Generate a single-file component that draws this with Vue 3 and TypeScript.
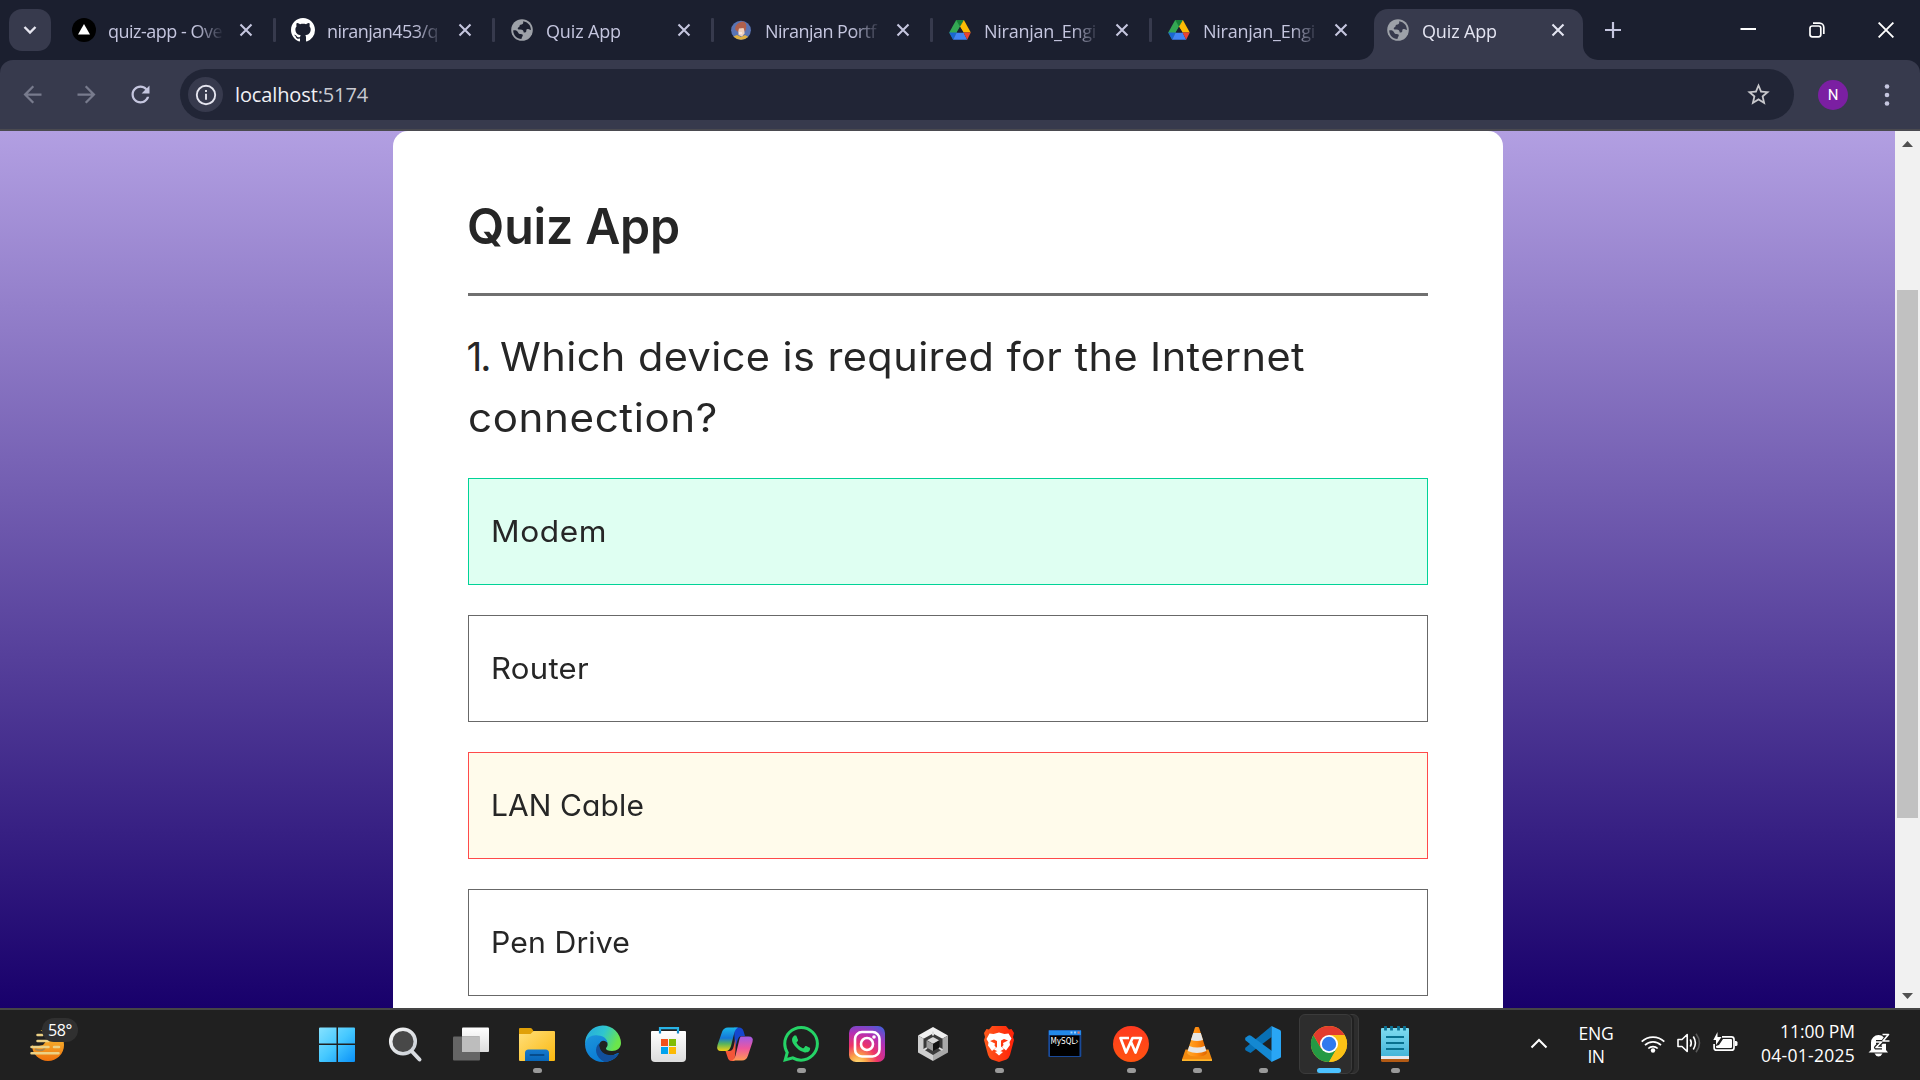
<script setup lang="ts">
import type { Directive } from 'vue'

interface Tab {
  title: string
  width: number
  icon: 'vercel' | 'github' | 'globe' | 'avatar' | 'drive'
  active?: boolean
}

interface Option {
  label: string
  width: number
  state?: 'correct' | 'wrong'
}

const tabs: Tab[] = [
  { title: 'quiz-app - Ove', width: 114, icon: 'vercel' },
  { title: 'niranjan453/q', width: 111, icon: 'github' },
  { title: 'Quiz App', width: 75, icon: 'globe' },
  { title: 'Niranjan Portf', width: 111, icon: 'avatar' },
  { title: 'Niranjan_Engi', width: 112, icon: 'drive' },
  { title: 'Niranjan_Engi', width: 112, icon: 'drive' },
  { title: 'Quiz App', width: 75, icon: 'globe', active: true },
]

const options: Option[] = [
  { label: 'Modem', width: 116, state: 'correct' },
  { label: 'Router', width: 98 },
  { label: 'LAN Cable', width: 153, state: 'wrong' },
  { label: 'Pen Drive', width: 139 },
]

// Spreads the tracking of a line so that it takes the given width.
const vFit: Directive<HTMLElement, number> = {
  mounted(el, binding) {
    const natural = el.getBoundingClientRect().width
    const count = (el.textContent ?? '').trim().length
    el.style.letterSpacing = `${(binding.value - natural) / count}px`
  },
}

// Widens the letters of a line; a small share of the gap goes to the tracking.
const vStretch: Directive<HTMLElement, number> = {
  mounted(el, binding) {
    const natural = el.getBoundingClientRect().width
    const count = (el.textContent ?? '').trim().length
    const tracked = natural + (binding.value - natural) * 0.25
    el.style.letterSpacing = `${(tracked - natural) / count}px`
    el.style.transform = `scaleX(${binding.value / tracked})`
    el.style.marginRight = `${binding.value - tracked}px`
  },
}
</script>

<template>
  <div class="screen">
    <header class="tabstrip">
      <div class="tab-search">
        <svg width="14" height="10" viewBox="0 0 14 10"><path d="M1.5 2l5.500 5.500L12.500 2" fill="none" stroke="#e6e6f0" stroke-width="2.400" /></svg>
      </div>
      <div v-for="(tab, i) in tabs" :key="i" class="tab" :class="{ active: tab.active }">
        <svg v-if="tab.icon === 'vercel'" class="fav" viewBox="0 0 24 24"><circle cx="12" cy="12" r="12" fill="#000" /><path d="M12 6l6 10.500H6z" fill="#fff" /></svg>
        <svg v-else-if="tab.icon === 'github'" class="fav" viewBox="0 0 16 16"><path fill="#fff" d="M8 0C3.580 0 0 3.580 0 8c0 3.540 2.290 6.530 5.470 7.590.4.070.55-.17.55-.38 0-.19-.01-.82-.01-1.490-2.010.37-2.530-.49-2.690-.94-.09-.23-.48-.94-.82-1.130-.28-.15-.68-.52-.01-.53.63-.01 1.080.58 1.230.82.72 1.210 1.870.87 2.330.66.07-.52.28-.87.51-1.070-1.780-.2-3.640-.89-3.640-3.950 0-.87.31-1.590.82-2.150-.08-.2-.36-1.020.08-2.120 0 0 .67-.21 2.200.82.64-.18 1.320-.27 2-.27s1.360.09 2 .27c1.530-1.040 2.200-.82 2.200-.82.44 1.100.16 1.920.08 2.120.51.56.82 1.270.82 2.150 0 3.070-1.870 3.750-3.650 3.950.29.25.54.73.54 1.480 0 1.070-.01 1.930-.01 2.200 0 .21.15.46.55.38A8.010 8.010 0 0 0 16 8c0-4.420-3.580-8-8-8z" /></svg>
        <svg v-else-if="tab.icon === 'globe'" class="fav" viewBox="0 0 24 24">
          <circle cx="12" cy="12" r="10.800" fill="#9da1a8" />
          <g :fill="tab.active ? '#373a4d' : '#1b1f2f'">
            <path d="M13.200 3.300c-.2 1.200.5 1.900-.6 2.700-1.300.9-3 .4-3 1.900 0 1.400-1.900 1.300-1.900 2.600 0 1 1.200 1 2.600 1 2.500 0 3.300 1.100 3.400 2.900 1.600 0 2.700-.2 2.600-1.700-.1-1.300.9-1.600 1.900-1.600 1.300 0 1.600 1 2.700.8 0-4.500-3-7.800-7.700-8.600z" />
            <path d="M3.200 12.400c.1 4.600 3.600 8.400 8.200 8.500.5-1 .3-1.800 1-2.500.7-.7.500-1.900-.6-2.100-1.600-.3-3-.2-3.700-1.800-.7-1.800-2.400-2.300-4.900-2.100z" />
          </g>
        </svg>
        <svg v-else-if="tab.icon === 'avatar'" class="fav" viewBox="0 0 24 24">
          <clipPath id="face"><ellipse cx="12" cy="12.200" rx="9.900" ry="9.500" /></clipPath>
          <g clip-path="url(#face)">
            <path fill="#5a74b4" d="M0 0h24v24H0z" /><path fill="#e0b040" d="M3 19l5-2 4 2 4-2 5 3v4H3z" />
            <path fill="#f0d0bc" d="M9 10h6.500v5.500l-2.500 3-3.500-1.500z" /><path fill="#b0604c" d="M6.500 12c-1.500-4 2.500-8 8-8.500 3.500 1.500 3.500 6 1.500 10.500l-1.500-4-4.500.5-1 3.500z" />
            <path stroke="#fff" d="M10 15h3" />
          </g>
        </svg>
        <svg v-else class="fav" viewBox="0 0 24 24">
          <path d="M8.200 2h7.700l-4 7L5 21 1.200 14.500z" fill="#34a853" /><path d="M8.200 2h7.700L12 8.800z" fill="#188038" />
          <path d="M15.900 2l6.900 12.500h-7.200L12 8.800z" fill="#fbbc04" />
          <path d="M1.200 14.500h7.400L5 21.700z" fill="#1967d2" /><path d="M8.600 14.500h7l3.600 7.200H5z" fill="#4285f4" /><path d="M15.500 14.500h7.300l-3.600 7.200z" fill="#ea4335" />
          <path d="M12 8.900l3.400 5.700H8.700z" fill="#1b1f2f" />
        </svg>
        <span class="tab-title"><span v-fit="tab.width">{{ tab.title }}</span></span>
        <svg class="tab-close" width="14" height="14" viewBox="0 0 14 14"><path d="M1.500 1.500l11 11M12.500 1.500l-11 11" stroke="currentColor" stroke-width="2.100" /></svg>
        <i v-if="i < 5" class="sep"></i>
        <template v-if="tab.active">
          <svg class="flare left" width="15" height="15"><path d="M15 0v15H0A15 15 0 0 0 15 0z" fill="#373a4d" /></svg>
          <svg class="flare right" width="15" height="15"><path d="M0 0v15h15A15 15 0 0 1 0 0z" fill="#373a4d" /></svg>
        </template>
      </div>
      <svg class="plus" width="16" height="16" viewBox="0 0 16 16"><path d="M8 0v16M0 8h16" stroke="#c5c6df" stroke-width="2.200" /></svg>
      <div class="window-controls">
        <svg width="16" height="16" viewBox="0 0 16 16"><path d="M.5 7h15.500" stroke="#fff" stroke-width="2" /></svg>
        <svg width="16" height="16" viewBox="0 0 16 16" fill="none" stroke="#fff" stroke-width="1.700"><rect x="1" y="4" width="10.800" height="10.800" rx="2.300" /><path d="M4 1.200h6.500a4.300 4.300 0 0 1 4.300 4.300V12" /></svg>
        <svg width="16" height="16" viewBox="0 0 16 16"><path d="M.6.600l14.800 14.800M15.400.600L.6 15.400" stroke="#fff" stroke-width="1.900" /></svg>
      </div>
    </header>

    <div class="toolbar-back">
      <div class="toolbar">
        <svg class="nav" viewBox="0 0 24 24" fill="#787b8d"><path d="M20 11H7.830l5.590-5.590L12 4l-8 8 8 8 1.410-1.410L7.830 13H20v-2z" /></svg>
        <svg class="nav" viewBox="0 0 24 24" fill="#787b8d"><path d="M12 4l-1.410 1.410L16.170 11H4v2h12.170l-5.580 5.590L12 20l8-8z" /></svg>
        <svg class="nav" viewBox="0 0 24 24" fill="#c5c6df"><path d="M17.650 6.350C16.200 4.900 14.210 4 12 4c-4.420 0-7.990 3.580-7.990 8s3.570 8 7.990 8c3.730 0 6.840-2.550 7.730-6h-2.080c-.82 2.330-3.040 4-5.650 4-3.310 0-6-2.690-6-6s2.690-6 6-6c1.660 0 3.140.69 4.220 1.780L13 11h7V4l-2.350 2.350z" /></svg>
        <div class="omnibox">
          <span class="site-info">
            <svg width="22" height="22" viewBox="0 0 22 22"><circle cx="11" cy="11" r="9.200" fill="none" stroke="#e4e4ee" stroke-width="1.900" /><path d="M11 9.700v6M11 6v2" stroke="#e4e4ee" stroke-width="1.900" /></svg>
          </span>
          <span v-fit="133" class="url">localhost<span class="port">:5174</span></span>
          <svg class="star" viewBox="0 0 24 24" fill="#c8c8cc"><path d="M22 9.240l-7.190-.62L12 2 9.190 8.630 2 9.240l5.460 4.730L5.820 21 12 17.270 18.180 21l-1.630-7.030L22 9.240zM12 15.400l-3.760 2.270 1-4.280-3.320-2.880 4.380-.38L12 6.100l1.710 4.040 4.380.38-3.320 2.880 1 4.280L12 15.400z" /></svg>
        </div>
        <span class="profile">N</span>
        <svg class="menu" width="6" height="24" viewBox="0 0 6 24" fill="#c5c6df"><circle cx="3" cy="3.500" r="2.300" /><circle cx="3" cy="12" r="2.300" /><circle cx="3" cy="20.500" r="2.300" /></svg>
      </div>
    </div>

    <div class="viewport">
      <main class="page">
        <section class="card">
          <h1><span v-stretch="213" class="line">Quiz App</span></h1>
          <hr />
          <h2>
            <span class="row"><span class="number">1.</span><span v-stretch="805" class="line">Which device is required for the Internet</span></span>
            <span class="row"><span v-stretch="250" class="line">connection?</span></span>
          </h2>
          <ul>
            <li v-for="o in options" :key="o.label" :class="o.state"><span v-stretch="o.width" class="line">{{ o.label }}</span></li>
          </ul>
        </section>
      </main>
      <div class="scrollbar">
        <svg width="11" height="6"><path d="M5.500 0L11 6H0z" fill="#505050" /></svg>
        <div class="thumb"></div>
        <svg width="11" height="6"><path d="M5.500 6L11 0H0z" fill="#505050" /></svg>
      </div>
    </div>

    <footer class="taskbar">
      <svg width="0" height="0" class="defs">
        <defs>
          <linearGradient id="win" x2="1" y2="1"><stop stop-color="#86e2ff" /><stop offset=".5" stop-color="#45c8ff" /><stop offset="1" stop-color="#0a91f8" /></linearGradient>
          <linearGradient id="white" x2="0" y2="1"><stop stop-color="#fff" /><stop offset="1" stop-color="#dcdcdc" /></linearGradient>
          <linearGradient id="gray" x2="1" y2="1"><stop stop-color="#f8f8f8" /><stop offset="1" stop-color="#c8cdd4" /></linearGradient>
          <linearGradient id="folder" x2="1" y2="1"><stop stop-color="#ffdf7a" /><stop offset="1" stop-color="#fbb80f" /></linearGradient>
          <linearGradient id="blue" x2="0" y2="1"><stop stop-color="#1679cc" /><stop offset="1" stop-color="#0866b8" /></linearGradient>
          <linearGradient id="edgeTop" x2="1" y2=".35"><stop stop-color="#24a6e0" /><stop offset=".55" stop-color="#2fc5cf" /><stop offset="1" stop-color="#6be54b" /></linearGradient>
          <linearGradient id="edgeMid" x2=".6" y2="1"><stop stop-color="#1d95dc" /><stop offset="1" stop-color="#0778d2" /></linearGradient>
          <linearGradient id="copA" x2="0" y2="1"><stop stop-color="#1bb6e8" /><stop offset=".45" stop-color="#1478d8" /><stop offset=".7" stop-color="#5ab55a" /><stop offset="1" stop-color="#f5d014" /></linearGradient>
          <linearGradient id="copB" x2="0" y2="1"><stop stop-color="#a05be8" /><stop offset=".5" stop-color="#ef579c" /><stop offset="1" stop-color="#ff9a52" /></linearGradient>
          <radialGradient id="insta" cx=".25" cy="1.050" r="1.200"><stop stop-color="#ffe27a" /><stop offset=".2" stop-color="#fba447" /><stop offset=".45" stop-color="#ee3368" /><stop offset=".72" stop-color="#b52fb4" /><stop offset="1" stop-color="#4b5bd8" /></radialGradient>
          <linearGradient id="brave" x2="1"><stop stop-color="#ff5a1c" /><stop offset="1" stop-color="#ff2108" /></linearGradient>
          <linearGradient id="wps" x2="0" y2="1"><stop stop-color="#ff3a20" /><stop offset="1" stop-color="#ff5310" /></linearGradient>
          <linearGradient id="sun" x2="0" y2="1"><stop stop-color="#f7ca3c" /><stop offset="1" stop-color="#f0720c" /></linearGradient>
          <linearGradient id="cone" x2="1"><stop stop-color="#ffab2d" /><stop offset=".5" stop-color="#ff8b0f" /><stop offset="1" stop-color="#de6500" /></linearGradient>
          <linearGradient id="note" x2="0" y2="1"><stop stop-color="#7fdcf0" /><stop offset="1" stop-color="#45b5da" /></linearGradient>
        </defs>
      </svg>

      <div class="weather">
        <svg width="36" height="36" viewBox="0 0 36 36">
          <circle cx="18" cy="19" r="16" fill="url(#sun)" />
          <path d="M5 23q7 3 10-1" stroke="#a8844c" stroke-width="2" fill="none" />
          <path d="M0 5h12l6 8-5 6-8 2-5-3z" fill="#202020" />
          <g stroke="#ecd185" stroke-width="2.500" stroke-linecap="round"><path d="M7.500 9h5M7.500 15h11M1.500 21h17M24 21h5M1.500 27.300h27" /></g>
        </svg>
        <span class="temp"><span v-fit="24">58°</span></span>
      </div>

      <nav class="apps">
        <div class="app start">
          <svg viewBox="0 0 36 36"><path fill="url(#win)" d="M0 1.500h16.500v16H-1v-15q0-1 1-1zM18 1.500h16q1 0 1 1v15H18zM-1 19h17.500v17H0q-1 0-1-1zM18 19h17v16q0 1-1 1H18z" /></svg>
        </div>
        <div class="app">
          <svg viewBox="0 0 36 36"><circle cx="16" cy="15.500" r="12.300" fill="#484848" stroke="url(#gray)" stroke-width="3.500" /><path d="M25 25.500l7.500 8" stroke="#d9dce1" stroke-width="4" stroke-linecap="round" /></svg>
        </div>
        <div class="app">
          <svg viewBox="0 0 36 36"><rect x="9" y="1.500" width="27" height="24.500" rx="1" fill="url(#white)" /><rect y="10.500" width="27" height="24" rx="1" fill="#656565" /><path d="M9 10.500h17.500q.5 0 .5.500v15H9z" fill="#bdbdbd" /></svg>
        </div>
        <div class="app run">
          <svg viewBox="0 0 36 36"><path d="M1 2h10.500q1.500 0 2 1.500L15 6v5H0V3q0-1 1-1z" fill="#e0a008" /><path d="M0 8h11.500l3-3H35q1 0 1 1v28q0 1-1 1H1q-1 0-1-1z" fill="url(#folder)" /><path d="M6 35v-8q0-3.500 3.500-3.500h17Q30 23.500 30 27v8z" fill="url(#blue)" /><path d="M11.500 29h13" stroke="#064c8c" stroke-width="2" stroke-linecap="round" /></svg>
        </div>
        <div class="app">
          <svg viewBox="0 0 36 36">
            <path d="M0 18A18 18 0 0 1 36 17c0 5-4 8-9 8-4 0-6-1-6-2.500 0-1 2-2 1.500-5C22 13 17 11 12 12 6 12 2 14 0 18z" fill="url(#edgeTop)" />
            <path d="M0 18C2 11 7 8.500 13 9.500c6 0 9.500 4 9.500 8-1.500-4-8-4-8.500 2 0 7 6 10.500 12 10 4-.5 6.500-3 8-2.500C31 33 25 36 18 36 8 36 0 28.500 0 18z" fill="url(#edgeMid)" />
            <path d="M14 17.500c-5 4-4 14 5.500 18.400C26 35.500 31 32.500 34 27c-7 4.500-20 2.500-20-9.500z" fill="#124f9c" />
          </svg>
        </div>
        <div class="app">
          <svg viewBox="0 0 36 36"><path d="M9 8V2.200h18V8" fill="none" stroke="#28b3e6" stroke-width="2.200" /><path d="M1 5h33q1 0 1 1v26q0 4-4 4H4q-4 0-4-4V6q0-1 1-1z" fill="url(#white)" /><path d="M9 5v2.500M27 5v2.500" stroke="#1689c8" stroke-width="2.200" /><path d="M10 13h7v7h-7z" fill="#f1511b" /><path d="M18 13h7v7h-7z" fill="#80bc06" /><path d="M10 21h7v7h-7z" fill="#00a3ee" /><path d="M18 21h7v7h-7z" fill="#fbb904" /></svg>
        </div>
        <div class="app">
          <svg viewBox="0 0 36 36">
            <path d="M17 1.500h5q3.500 0 4.500 3.500l1.500 5h-3q-3 0-4 3l-3 9z" fill="#1546cf" />
            <path d="M11 1.500h10q-2.500 1-3.500 4.500L14 20q-1.500 5-5 5H4q-5 0-3.500-6L5 6q1.500-4.500 6-4.500z" fill="url(#copA)" />
            <path d="M8.500 25h4q3 0 4-4l2-8v11l-1 11h-3q-3 0-4-4z" fill="#f45638" />
            <path d="M24 10.500h7.500q5.500 0 4 5.500L31 29.500q-1.500 5-6 5H15q2.500-1 3.500-5L22 15q1-4.500 2-4.500z" fill="url(#copB)" />
          </svg>
        </div>
        <div class="app run">
          <svg viewBox="0 0 24 24"><path fill="#25d366" d="M17.472 14.382c-.297-.149-1.758-.867-2.030-.967-.273-.099-.471-.148-.67.15-.197.297-.767.966-.94 1.164-.173.199-.347.223-.644.075-.297-.15-1.255-.463-2.390-1.475-.883-.788-1.480-1.761-1.653-2.059-.173-.297-.018-.458.13-.606.134-.133.298-.347.446-.52.149-.174.198-.298.298-.497.099-.198.05-.371-.025-.52-.075-.149-.669-1.612-.916-2.207-.242-.579-.487-.5-.669-.51-.173-.008-.371-.01-.57-.01-.198 0-.52.074-.792.372-.272.297-1.040 1.016-1.040 2.479 0 1.462 1.065 2.875 1.213 3.074.149.198 2.096 3.200 5.077 4.487.709.306 1.262.489 1.694.625.712.227 1.360.195 1.871.118.571-.085 1.758-.719 2.006-1.413.248-.694.248-1.289.173-1.413-.074-.124-.272-.198-.57-.347m-5.421 7.403h-.004a9.870 9.870 0 0 1-5.031-1.378l-.361-.214-3.741.982.998-3.648-.235-.374a9.860 9.860 0 0 1-1.510-5.260c.001-5.450 4.436-9.884 9.888-9.884 2.640 0 5.122 1.030 6.988 2.898a9.825 9.825 0 0 1 2.893 6.994c-.003 5.450-4.437 9.884-9.885 9.884m8.413-18.297A11.815 11.815 0 0 0 12.050 0C5.495 0 .16 5.335.157 11.892c0 2.096.547 4.142 1.588 5.945L.057 24l6.305-1.654a11.882 11.882 0 0 0 5.683 1.448h.005c6.554 0 11.890-5.335 11.893-11.893a11.821 11.821 0 0 0-3.480-8.413z" /></svg>
        </div>
        <div class="app">
          <svg viewBox="0 0 36 36"><rect width="36" height="36" rx="7" fill="url(#insta)" /><g fill="none" stroke="#fff" stroke-width="2.600"><rect x="6" y="6" width="24.500" height="24.500" rx="7" /><circle cx="18" cy="18" r="6" /></g><circle cx="25" cy="11" r="1.800" fill="#fff" /></svg>
        </div>
        <div class="app">
          <svg viewBox="0 0 36 36"><path d="M18 1l15 8.500-15 8.500L3 9.500z" fill="#f0f0f0" /><path d="M3 9.500L18 18v17L3 26.500z" fill="#cecece" /><path d="M33 9.500L18 18v17l15-8.500z" fill="#a9a9a9" /><path d="M18 7.500l9.500 5.300v10.500L18 29l-9.500-5.700V12.800z" fill="#3a3a3a" /><path d="M18 11l6 3.300-6 3.500-6-3.500z" fill="#d8d8d8" /><path d="M18 18l-6.500-3.500v7L18 25z" fill="#9b9b9b" /><path d="M18 18l6.500-3.500v7L18 25z" fill="#111" /><path d="M18 5.500v4M8.500 24l3.500-2M27.500 24l-3.500-2" stroke="#ddd" stroke-width="2" /></svg>
        </div>
        <div class="app run">
          <svg viewBox="0 0 36 36"><path d="M11 0h14l3 3.500 2.500-.5 2.500 4-1 4 1 3-4 15q-1 3-3.500 4.500L18 36l-7.500-2.500Q8 32 7 29L3 14l1-3-1-4 2.500-4 2.500.5z" fill="url(#brave)" /><path d="M8.500 7.500l4 .5L18 6.500l5.500 1.500 4-.5 3 5-2 3.500.5 3-4 5.500-4-3.500 1.500-2-.5-2 5-2.500-4-1.500-3 1.500v6l3 2.500L18 26l-5-2.500 3-2.500v-6L13 13.500 9 15l5 2.500-.5 2 1.500 2-4 3.500L7 19.500l.5-3-2-3.500zM14 26l4-1.500 4 1.500-4 3.500z" fill="#fff" /></svg>
        </div>
        <div class="app">
          <svg viewBox="0 0 36 36"><rect x="1.300" y="4" width="33" height="27" rx="1" fill="#194a9a" /><path d="M2 4.500h32v4.500H2z" fill="#2389e8" /><path d="M23.500 5.500h2v2h-2zM27 5.500h2v2h-2z" fill="#9dd0ff" /><path d="M30.500 5.500h2.200v2.200h-2.200z" fill="#f17359" /><path d="M3 9.500h29.500V30H3z" fill="#000" /><text x="3.500" y="18" font-family="DejaVu Sans, sans-serif" font-size="8" fill="#fff" textLength="28" lengthAdjust="spacingAndGlyphs">MySQL›</text></svg>
        </div>
        <div class="app run">
          <svg viewBox="0 0 36 36"><circle cx="18" cy="18" r="18" fill="url(#wps)" /><path d="M16 12H7.500l5.500 14.500L19.500 12H28l-5.500 14.500L18 16" fill="none" stroke="#fff" stroke-width="2.700" stroke-linejoin="round" /></svg>
        </div>
        <div class="app run">
          <svg viewBox="0 0 36 36"><path d="M6.500 23.500h23L33 33.500v1.500H3v-1.500z" fill="#f28a10" /><path d="M3 33.300h30V35H3z" fill="#ffb52b" /><path d="M17 1h2q1 0 1.300 1.300L28 27q-2 3.500-10 3.500T8 27l7.700-24.700Q16 1 17 1z" fill="url(#cone)" /><path d="M14.200 7h7.600l2.200 7q-6 2-12 0zM10.200 20q8 3 15.600 0l1.500 5q-9.300 4-18.600 0z" fill="#e5e5e5" /></svg>
        </div>
        <div class="app run">
          <svg viewBox="0 0 36 36"><path d="M26.500 0v11L5.500 27 .7 24.500Q-.7 23 .7 21.500z" fill="#0870b5" /><path d="M.7 14.500Q-.7 13 .7 11.500L3 9.700q1.500-1 3 0L27 25v11z" fill="#1488d2" /><path d="M26.500 0L35 4q1 .5 1 1.500v25q0 1-1 1.500l-8.500 4V0z" fill="#29a6f5" /></svg>
        </div>
        <div class="app current">
          <i class="stack"></i>
          <svg viewBox="0 0 36 36"><circle cx="18" cy="18" r="18" fill="#fbc116" /><path d="M18 18L2.400 9A18 18 0 0 1 33.600 9H18z" fill="#e33b2e" /><path d="M2.400 9A18 18 0 0 0 18 36l7.800-13.500L18 18l-7.800 4.500z" fill="#249944" /><path d="M2.400 9L10.200 22.500 18 18V9z" fill="#e33b2e" /><path d="M18 9h15.600A18 18 0 0 1 18 36l7.800-13.500z" fill="#fbc116" /><circle cx="18" cy="18" r="9" fill="#fff" /><circle cx="18" cy="18" r="7.200" fill="#2f79ee" /></svg>
        </div>
        <div class="app run">
          <svg viewBox="0 0 36 36"><path d="M4 30h28v4.500q0 1.500-1.500 1.500h-25Q4 36 4 34.500z" fill="#b35a14" /><path d="M4 29h28v4H4z" fill="#e8e8ee" /><path d="M5 2h26q1 0 1 1v27H4V3q0-1 1-1z" fill="url(#note)" /><path d="M8.500 0v4.500M14.500 0v4.500M21.500 0v4.500M27.500 0v4.500" stroke="#0b7395" stroke-width="2.800" /><path d="M9 11h18M9 17h18M9 23h18" stroke="#08708f" stroke-width="2" /></svg>
        </div>
      </nav>

      <div class="tray">
        <svg class="chevron" width="18" height="11" viewBox="0 0 18 11"><path d="M1.500 9.500L9 2l7.500 7.500" fill="none" stroke="#fff" stroke-width="2" /></svg>
        <div class="lang"><span v-fit="35">ENG</span><span v-fit="17">IN</span></div>
        <svg class="wifi" width="24" height="18" viewBox="0 0 24 18"><g fill="none" stroke="#fff" stroke-width="1.700"><path d="M.7 6.700a16 16 0 0 1 22.600 0M4 10.200a11.300 11.300 0 0 1 16 0M7.300 13.500a6.600 6.600 0 0 1 9.400 0" /></g><circle cx="12" cy="15.500" r="2.200" fill="#fff" /></svg>
        <svg class="volume" width="24" height="20" viewBox="0 0 24 20" fill="none" stroke-width="1.600"><path d="M1 6.500h4L10.200 1.500v17L5 13.500H1z" stroke="#fff" stroke-linejoin="round" /><path d="M13.300 6.300q2 3.700 0 7.400M16.300 3.500q4.200 6.500 0 13" stroke="#fff" /><path d="M19 .8q7 9.200 0 18.400" stroke="#585858" /></svg>
        <svg class="battery" width="25" height="20" viewBox="0 0 25 20"><path d="M9 4.800h9.500q2.500 0 2.500 2.500v8.400q0 2.500-2.500 2.500H3.600q-2.500 0-2.500-2.500V12" fill="none" stroke="#fff" stroke-width="1.700" /><path d="M10 7h8q1 0 1 1v7q0 1-1 1H4q-1 0-1-1v-1l3-1z" fill="#fff" /><path d="M22 9h1q1.500 0 1.500 1.500v2q0 1.500-1.500 1.500h-1z" fill="#fff" /><path d="M4.500 0v5h4L3 13V8H.3z" fill="#fff" /></svg>
        <div class="clock"><span v-fit="75">11:00 PM</span><span v-fit="94">04-01-2025</span></div>
        <svg class="bell" width="23" height="24" viewBox="0 0 23 24"><path d="M3 17V9.500a7.500 7.500 0 0 1 15 0V17l2 2.500H.500z" fill="#fff" /><path d="M6.500 20.500h8q-1.500 3-4 3t-4-3z" fill="#fff" /><g fill="none" stroke-linejoin="round"><path d="M15 1.500h5.500l-5 7h6" stroke="#202020" stroke-width="4.500" /><path d="M8 9h5.500L8 14.500h6" stroke="#202020" stroke-width="4" /><path d="M8 9h5.500L8 14.500h6M14.500 1.500h6l-5.500 6.500h6.500" stroke="#fff" stroke-width="1.700" /></g></svg>
      </div>
    </footer>
  </div>
</template>

<style>
body {
  margin: 0;
  overflow: hidden;
}
</style>

<style scoped>
.screen {
  width: 1920px;
  height: 1080px;
  display: flex;
  flex-direction: column;
  font-family: 'Open Sans', 'Noto Sans', sans-serif;
  overflow: hidden;
}
svg {
  display: block;
  flex: none;
}

/* tab strip */
.tabstrip {
  height: 60px;
  flex: none;
  display: flex;
  align-items: center;
  background: #1b1f2f;
  padding-left: 9px;
}
.tab-search {
  width: 42px;
  height: 42px;
  border-radius: 13px;
  background: #373a4d;
  display: flex;
  align-items: center;
  justify-content: center;
  margin-right: 9px;
}
.tab {
  width: 207px;
  height: 60px;
  padding-left: 12px;
  flex: none;
  display: flex;
  align-items: center;
  position: relative;
  color: #c5c6df;
}
.tab.active {
  width: 197px;
  height: 51px;
  margin-top: 9px;
  background: #373a4d;
  border-radius: 14px 14px 0 0;
  color: #e4e5f2;
}
.tab.active > .fav,
.tab.active > .tab-close {
  margin-bottom: 9px;
}
.fav {
  width: 24px;
  height: 24px;
}
.tab-title {
  width: 115px;
  margin: 2px 16px 0 12px;
  flex: none;
  font-size: 18px;
  line-height: 30px;
  white-space: nowrap;
  -webkit-mask-image: linear-gradient(90deg, #000 88px, transparent 116px);
  mask-image: linear-gradient(90deg, #000 88px, transparent 116px);
}
.tab.active > .tab-title {
  margin: 0 14px 7px 12px;
}
.sep {
  width: 3px;
  height: 24px;
  border-radius: 1px;
  margin-left: 20px;
  background: #373a4d;
  flex: none;
}
.flare {
  position: absolute;
  bottom: 0;
}
.flare.left {
  left: -15px;
}
.flare.right {
  right: -15px;
}
.plus {
  margin-left: 22px;
}
.window-controls {
  margin-left: auto;
  margin-right: 26px;
  display: flex;
  gap: 53px;
}

/* toolbar */
.toolbar-back {
  background: #1b1f2f;
  flex: none;
}
.toolbar {
  height: 69px;
  display: flex;
  align-items: center;
  background: #373a4d;
  border-bottom: 2px solid #4a4a50;
  border-radius: 13px 13px 0 0;
  padding-left: 19px;
}
.nav {
  width: 27px;
  height: 27px;
  margin-right: 27px;
}
.omnibox {
  width: 1614px;
  height: 51px;
  margin-left: -1px;
  border-radius: 26px;
  background: #212536;
  display: flex;
  align-items: center;
  box-sizing: border-box;
  padding: 0 22px 0 8px;
}
.site-info {
  width: 35px;
  height: 35px;
  border-radius: 50%;
  background: #373a4d;
  display: flex;
  align-items: center;
  justify-content: center;
  margin-right: 12px;
}
.url {
  font-size: 20px;
  line-height: 30px;
  color: #f0f0f4;
}
.port {
  color: #c9cad2;
}
.star {
  width: 27px;
  height: 27px;
  margin-left: auto;
}
.profile {
  width: 30px;
  height: 30px;
  margin: 1px 0 0 24px;
  border-radius: 50%;
  background: #7b1fa2;
  color: #fff;
  font: 15px/30px Roboto, sans-serif;
  text-align: center;
}
.menu {
  margin-left: 36px;
}

/* page */
.viewport {
  height: 877px;
  flex: none;
  display: flex;
}
.page {
  width: 1895px;
  height: 877px;
  background: linear-gradient(#b29fe2, #18006b);
  display: flex;
  justify-content: center;
}
.card {
  width: 960px;
  height: 818px;
  padding: 59px 75px 0;
  background: #fff;
  border-radius: 15px 15px 0 0;
  color: #262626;
  font-family: Inter, 'Open Sans', sans-serif;
  font-feature-settings: 'cv11';
}
.line {
  display: inline-block;
  transform-origin: 0 50%;
  white-space: nowrap;
}
h1 {
  margin: 0 0 0 -1px;
  font-size: 49px;
  line-height: 73px;
  font-weight: 600;
}
hr {
  height: 3px;
  border: 0;
  margin: 30px 0 0;
  background: #707070;
}
h2 {
  margin: 30px 0 0;
  height: 152px;
  font-size: 39px;
  line-height: 61px;
  font-weight: 400;
}
.row {
  display: flex;
}
.number {
  width: 33px;
  flex: none;
  margin-left: -1px;
  letter-spacing: -2px;
}
ul {
  list-style: none;
  margin: 0;
  padding: 0;
  display: flex;
  flex-direction: column;
  gap: 30px;
}
li {
  height: 105px;
  line-height: 105px;
  border: 1px solid #686868;
  padding-left: 22px;
  font-size: 29.500px;
}
li.correct {
  background: #dffff2;
  border-color: #00d397;
}
li.wrong {
  background: #fffbeb;
  border-color: #ff4a4a;
}
.scrollbar {
  width: 25px;
  height: 877px;
  background: #f1f1f1;
  display: flex;
  flex-direction: column;
  align-items: center;
  box-sizing: border-box;
  padding: 10px 0 9px;
}
.thumb {
  width: 21px;
  height: 528px;
  margin: 143px 0 auto;
  background: #c1c1c1;
}

/* taskbar */
.taskbar {
  height: 70px;
  flex: none;
  border-top: 2px solid #454545;
  background: #202020;
  display: flex;
  color: #fff;
}
.defs {
  position: absolute;
}
.weather {
  width: 276px;
  height: 54px;
  padding: 16px 0 0 30px;
  position: relative;
}
.temp {
  position: absolute;
  left: 42px;
  top: 8px;
  width: 36px;
  height: 24px;
  border-radius: 12px;
  background: #303030;
  text-align: center;
  font-size: 16px;
  line-height: 24px;
}
.apps {
  display: flex;
  width: 1122px;
}
.app {
  width: 66px;
  height: 70px;
  display: flex;
  justify-content: center;
  padding-top: 16px;
  box-sizing: border-box;
  position: relative;
}
.app svg {
  width: 36px;
  height: 36px;
  overflow: visible;
  position: relative;
}
.app.start {
  padding-right: 2px;
}
.app.run::after,
.app.current::after {
  content: '';
  position: absolute;
  left: 28.500px;
  top: 58px;
  width: 9px;
  height: 5px;
  border-radius: 3px;
  background: #9a9a9a;
}
.app.current::after {
  left: 21px;
  width: 24px;
  background: #4cc2ff;
}
.app.current::before,
.stack {
  content: '';
  position: absolute;
  left: 3px;
  top: 4px;
  width: 51px;
  height: 58px;
  border: 1px solid #3b3b3b;
  border-radius: 6px;
  background: #2d2d2d;
}
.app.current::before {
  z-index: 1;
  box-shadow: 2px 0 0 #202020;
}
.app.current svg,
.app.current::after {
  z-index: 2;
}
.stack {
  left: 10px;
}
.tray {
  display: flex;
  align-items: flex-start;
  font-size: 17.500px;
  line-height: 24px;
  white-space: nowrap;
}
.chevron {
  margin: 28px 0 0 102px;
}
.lang {
  width: 36px;
  margin: 11px 0 0 30px;
  display: flex;
  flex-direction: column;
  align-items: center;
}
.lang > :last-child {
  line-height: 22px;
}
.wifi {
  margin: 25px 0 0 27px;
}
.volume {
  margin: 23px 0 0 12px;
}
.battery {
  margin: 22px 0 0 12px;
}
.clock {
  width: 110px;
  margin: 9px 0 0 7px;
  display: flex;
  flex-direction: column;
  align-items: flex-end;
}
.bell {
  margin: 23px 0 0 13px;
}
</style>
